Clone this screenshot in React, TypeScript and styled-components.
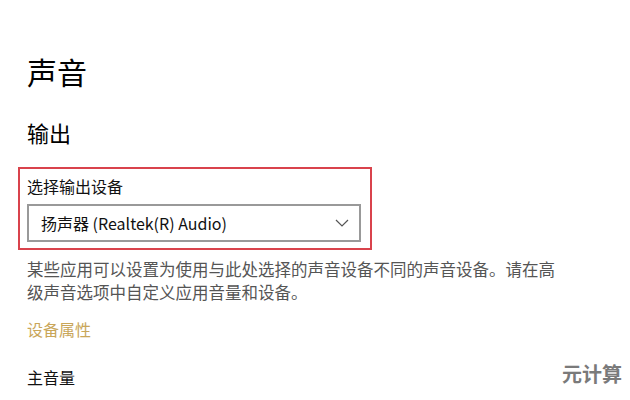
import React from 'react'
import styled, { createGlobalStyle } from 'styled-components'

const GlobalStyle = createGlobalStyle`
  html, body {
    margin: 0;
    padding: 0;
    background: #ffffff;
  }
  body {
    font-family: "Noto Sans CJK SC", "Liberation Sans", sans-serif;
    color: #000;
  }
`

const Page = styled.div`
  position: relative;
  width: 630px;
  height: 400px;
  overflow: hidden;
  padding: 50px 0 0 27px;
  box-sizing: border-box;
`

const Title = styled.h1`
  margin: 0;
  font-size: 30px;
  font-weight: 400;
  line-height: 42px;
`

const Subtitle = styled.h2`
  margin: 25px 0 0;
  font-size: 22px;
  font-weight: 400;
  line-height: 30px;
`

const Highlight = styled.div`
  margin: 20px 0 0 -9px;
  width: 354px;
  height: 83px;
  box-sizing: border-box;
  border: 2px solid #d9434c;
  padding: 5px 9px 0 7px;
`

const Label = styled.div`
  font-size: 16px;
  line-height: 24px;
  color: #111;
`

const Select = styled.div`
  margin-top: 6px;
  width: 334px;
  height: 38px;
  box-sizing: border-box;
  border: 2px solid #999;
  display: flex;
  align-items: center;
  justify-content: space-between;
  padding: 0 10px 0 12px;
`

const SelectText = styled.span`
  font-family: "Noto Sans CJK SC", sans-serif;
  font-size: 16px;
  color: #111;
`

const Description = styled.p`
  margin: 8px 0 0;
  width: 540px;
  font-size: 16.5px;
  line-height: 23px;
  color: #555;
`

const Link = styled.div`
  margin-top: 14px;
  font-size: 16px;
  line-height: 22px;
  color: #c9a659;
`

const SectionLabel = styled.div`
  margin-top: 26px;
  font-size: 16px;
  line-height: 22px;
  color: #111;
`

const Watermark = styled.div`
  position: absolute;
  right: 8px;
  bottom: 12px;
  font-size: 20px;
  font-weight: 700;
  color: #7a7a7a;
`

const Chevron = () => (
  <svg width="14" height="8" viewBox="0 0 14 8" fill="none">
    <path d="M1 1 L7 7 L13 1" stroke="#555" strokeWidth="1.2" />
  </svg>
)

export default function App() {
  return (
    <Page>
      <GlobalStyle />
      <Title>声音</Title>
      <Subtitle>输出</Subtitle>
      <Highlight>
        <Label>选择输出设备</Label>
        <Select>
          <SelectText>扬声器 (Realtek(R) Audio)</SelectText>
          <Chevron />
        </Select>
      </Highlight>
      <Description>
        某些应用可以设置为使用与此处选择的声音设备不同的声音设备。请在高级声音选项中自定义应用音量和设备。
      </Description>
      <Link>设备属性</Link>
      <SectionLabel>主音量</SectionLabel>
      <Watermark>元计算</Watermark>
    </Page>
  )
}
